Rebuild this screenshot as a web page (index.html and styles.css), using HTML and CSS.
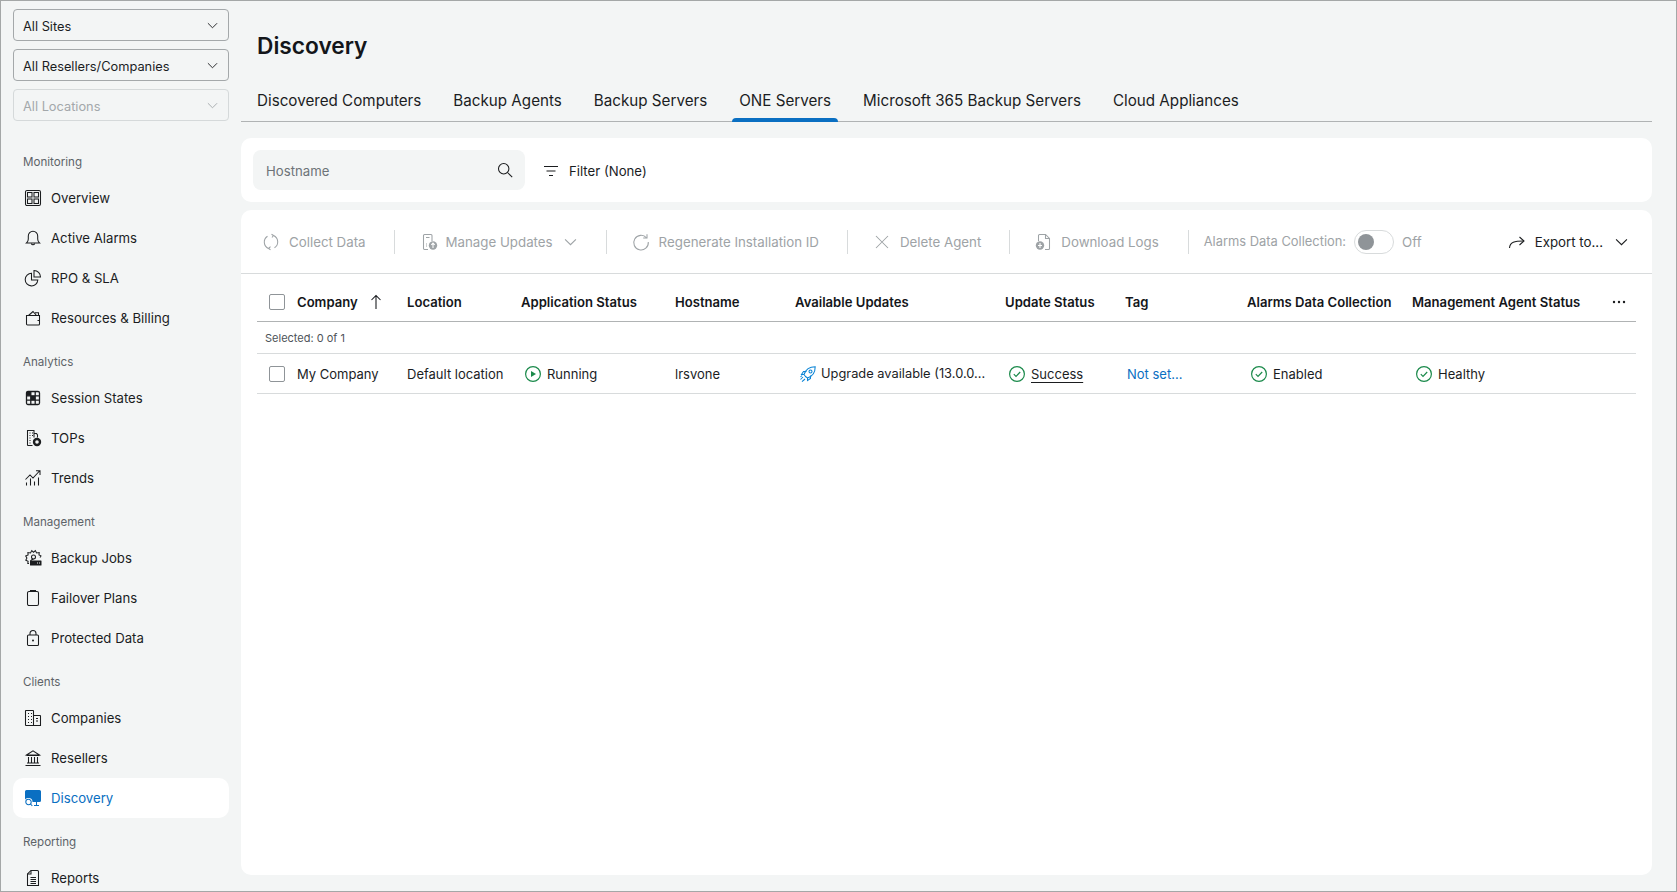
FILE: index.html
```html
<!DOCTYPE html>
<html lang="en">
<head>
<meta charset="utf-8">
<title>Discovery</title>
<link rel="stylesheet" href="styles.css">
</head>
<body>
<div class="app">
  <aside class="sidebar">
    <div class="selects">
      <div class="select"><span>All Sites</span><svg class="chev" viewBox="0 0 12 7"><path d="M1 1l5 5 5-5"/></svg></div>
      <div class="select"><span>All Resellers/Companies</span><svg class="chev" viewBox="0 0 12 7"><path d="M1 1l5 5 5-5"/></svg></div>
      <div class="select disabled"><span>All Locations</span><svg class="chev" viewBox="0 0 12 7"><path d="M1 1l5 5 5-5"/></svg></div>
    </div>
    <nav class="nav">
      <div class="nav-label">Monitoring</div>
      <a class="nav-item"><svg class="ico" viewBox="0 0 16 16"><rect x=".5" y=".5" width="15" height="15" rx="1.5"/><rect x="2.500" y="2.500" width="4.500" height="4.500"/><rect x="9" y="2.500" width="4.500" height="4.500"/><rect x="2.500" y="9" width="4.500" height="4.500"/><rect x="9" y="9" width="4.500" height="4.500"/></svg><span>Overview</span></a>
      <a class="nav-item"><svg class="ico" viewBox="0 0 16 16"><path d="M1.500 13c1.200-1 1.800-2 1.800-4V6a4.700 4.700 0 0 1 9.400 0v3c0 2 .6 3 1.800 4z"/><path d="M6.300 13.500a1.800 1.800 0 0 0 3.400 0"/></svg><span>Active Alarms</span></a>
      <a class="nav-item"><svg class="ico" viewBox="0 0 16 16"><path d="M6.500 3.300a6.300 6.300 0 1 0 6.300 6.700H6.500z"/><path d="M9 .5a6.500 6.500 0 0 1 6.500 6.500H9z"/></svg><span>RPO &amp; SLA</span></a>
      <a class="nav-item"><svg class="ico" viewBox="0 0 16 16"><path d="M1.500 5.500h13v8.500a1 1 0 0 1-1 1h-11a1 1 0 0 1-1-1z"/><path d="M3.500 5.500L8 1.500l3.500 4M10 2.800h3.500v2.700"/><path d="M12.500 10.500h2"/></svg><span>Resources &amp; Billing</span></a>

      <div class="nav-label">Analytics</div>
      <a class="nav-item"><svg class="ico grid" viewBox="0 0 16 16"><rect x="1.500" y="1.500" width="13" height="13" rx="1.500"/><path class="fill" d="M1.500 1.500h4.300v4.300H1.500zM5.800 5.800h4.400v4.400H5.800z"/><path d="M5.800 1.500v13M10.200 1.500v13M1.500 5.800h13M1.500 10.200h13"/></svg><span>Session States</span></a>
      <a class="nav-item"><svg class="ico" viewBox="0 0 16 16"><path d="M2.500 15.500V.5h6.500v7"/><path d="M9 3.500h2.500l1 1.500v2.500"/><path d="M2.500 15.500h5"/><path d="M4.500 3h1M7 3h1M4.500 5.500h1M7 5.500h1M4.500 8h1M4.500 10.500h1M4.500 13h1"/><circle class="fill" cx="12" cy="12" r="4.200"/><circle class="light-fill" cx="12" cy="12" r="1.800"/></svg><span>TOPs</span></a>
      <a class="nav-item"><svg class="ico" viewBox="0 0 16 16"><path d="M.5 9.500L5 5l3 3 6.500-7M11 .8h4V5"/><path d="M1.500 15.500v-3M5.500 15.500V8.500M9.500 15.500v-4M13.500 15.500V7.500"/></svg><span>Trends</span></a>

      <div class="nav-label">Management</div>
      <a class="nav-item"><svg class="ico gear" viewBox="0 0 16 16"><path d="M4 13.500H2.800l.3-2.200-2.300-1.100L1.900 8 .7 5.900l2.400-1L2.900 2.500l2.600.4L6.800.6 8.500 2.300 10.300.6l1.300 2.300 2.600-.4-.2 2.400 2 1-1 1.700"/><circle cx="8.500" cy="7" r="2"/><path d="M5.500 11c.5-1 1.500-1.800 3-1.800"/><rect class="fill" x="5" y="10.500" width="11.500" height="5" rx=".5"/><path class="light" d="M12 13h1M14 13h1"/></svg><span>Backup Jobs</span></a>
      <a class="nav-item"><svg class="ico" viewBox="0 0 16 16"><rect x="2.500" y="1.500" width="11" height="14" rx="1.500"/><path d="M5.500 1.500V.5h5v1"/></svg><span>Failover Plans</span></a>
      <a class="nav-item"><svg class="ico" viewBox="0 0 16 16"><rect x="2.500" y="5" width="11" height="10.500" rx="1"/><path d="M5 5V3.500a3 3 0 0 1 6 0V5"/><circle class="fill" cx="8" cy="10.500" r="1"/></svg><span>Protected Data</span></a>

      <div class="nav-label">Clients</div>
      <a class="nav-item"><svg class="ico" viewBox="0 0 16 16"><path d="M.5 15.500V1a.5.500 0 0 1 .5-.5h7a.5.500 0 0 1 .5.500v14.500"/><path d="M8.500 5.500h6.500a.5.500 0 0 1 .5.500v9.500H.5"/><path d="M3 3.500h1M6 3.500h1M3 6.500h1M6 6.500h1M3 9.500h1M6 9.500h1M3 12.500h1M6 12.500h1M11 8.500h2M11 11h2"/></svg><span>Companies</span></a>
      <a class="nav-item"><svg class="ico" viewBox="0 0 16 16"><path d="M1.500 5L8 .8 14.500 5z"/><path d="M1.500 5.500h13M3.500 7v5.500M6.500 7v5.500M9.500 7v5.500M12.500 7v5.500M2 13h12M.5 15.500h15"/></svg><span>Resellers</span></a>
      <a class="nav-item active"><svg class="ico blue-dark" viewBox="0 0 16 16"><path class="blue-fill" d="M1.500 0h13A1.500 1.500 0 0 1 16 1.500v9a1.500 1.500 0 0 1-1.500 1.500h-13A1.500 1.500 0 0 1 0 10.500v-9A1.500 1.500 0 0 1 1.500 0z"/><circle class="white-fill" cx="3.500" cy="12" r="4"/><circle cx="3.500" cy="12" r="2.700"/><path d="M5.500 14l1.800 1.800M11.500 12v3.500M9 15.500h5"/></svg><span>Discovery</span></a>

      <div class="nav-label">Reporting</div>
      <a class="nav-item"><svg class="ico" viewBox="0 0 16 16"><path d="M2.500 15.500V4l3.500-3.500h6.500a1 1 0 0 1 1 1v14z"/><path d="M6 .5V4H2.500"/><path d="M5.500 7.500h5.500M5.500 9.500h5.500M5.500 11.500h5.500M5.500 13.500h5.500"/></svg><span>Reports</span></a>
    </nav>
  </aside>

  <main class="main">
    <h1 class="title">Discovery</h1>
    <div class="tabs">
      <a class="tab">Discovered Computers</a>
      <a class="tab">Backup Agents</a>
      <a class="tab">Backup Servers</a>
      <a class="tab active">ONE Servers</a>
      <a class="tab">Microsoft 365 Backup Servers</a>
      <a class="tab">Cloud Appliances</a>
    </div>

    <section class="card filter-card">
      <div class="search"><span>Hostname</span><svg class="ico sm" viewBox="0 0 16 16"><circle cx="6.700" cy="6.700" r="5.200"/><path d="M10.500 10.500l4.700 4.700"/></svg></div>
      <button class="filter"><svg class="ico" viewBox="0 0 16 16"><path d="M1 3.500h14M3.500 8h9M6 12.500h4"/></svg><span>Filter (None)</span></button>
    </section>

    <section class="card grid-card">
      <div class="toolbar">
        <span class="tool t1"><svg class="ico" viewBox="0 0 16 16"><path d="M4.500 2.200A7 7 0 0 0 5.500 14.500M11.500 13.800A7 7 0 0 0 10.500 1.500"/><path d="M8.500 .2l2 1.300-1.500 2M7.500 12.700l-2 1.800 2 1.300"/></svg><span>Collect Data</span></span>
        <i class="sep"></i>
        <span class="tool t2"><svg class="ico" viewBox="0 0 16 16"><path d="M6 15.500H2.500a1 1 0 0 1-1-1V1.500a1 1 0 0 1 1-1h6.500a1 1 0 0 1 1 1V7"/><path d="M4 3.500h3.500M4 10h1M4 12h1"/><circle class="grey-fill" cx="11" cy="11.500" r="4.200"/><path class="light" d="M11 14v-5M9.300 10.800L11 9.100l1.700 1.700"/></svg><span>Manage Updates</span><svg class="chev" viewBox="0 0 12 7"><path d="M1 1l5 5 5-5"/></svg></span>
        <i class="sep"></i>
        <span class="tool t3"><svg class="ico" viewBox="0 0 16 16"><path d="M13.500 3.800A7.300 7.300 0 1 0 15.300 8"/><path d="M14 .3v3.700h-3.800"/></svg><span>Regenerate Installation ID</span></span>
        <i class="sep"></i>
        <span class="tool t4"><svg class="ico" viewBox="0 0 16 16"><path d="M2 2l12 12M14 2L2 14"/></svg><span>Delete Agent</span></span>
        <i class="sep"></i>
        <span class="tool t5"><svg class="ico" viewBox="0 0 16 16"><path d="M3.500 7V1.500a1 1 0 0 1 1-1h6l4 4v10a1 1 0 0 1-1 1H10"/><path d="M10.500 .5v4h4"/><circle class="grey-fill" cx="5" cy="11.500" r="4.200"/><path class="light" d="M5 9v5M3 11.500h4"/></svg><span>Download Logs</span></span>
        <i class="sep"></i>
        <span class="tool t6"><span class="alarm">Alarms Data Collection:</span><span class="toggle"><i></i></span><span>Off</span></span>
        <span class="tool export"><svg class="ico" viewBox="0 0 16 16"><path d="M.5 14c.5-6 5-7 14-7"/><path d="M10.500 3l4.500 4-4.500 4"/></svg><span>Export to...</span><svg class="chev" viewBox="0 0 12 7"><path d="M1 1l5 5 5-5"/></svg></span>
      </div>

      <div class="table">
        <div class="row head">
          <div class="cell cb"><i class="check"></i></div>
          <div class="cell">Company<svg class="ico sort" viewBox="0 0 12 16"><path d="M6 15V1.500M1.500 6L6 1.500 10.500 6"/></svg></div>
          <div class="cell">Location</div>
          <div class="cell">Application Status</div>
          <div class="cell">Hostname</div>
          <div class="cell">Available Updates</div>
          <div class="cell">Update Status</div>
          <div class="cell">Tag</div>
          <div class="cell">Alarms Data Collection</div>
          <div class="cell">Management Agent Status</div>
          <div class="cell more"><svg viewBox="0 0 14 4"><circle cx="2" cy="2" r="1.200"/><circle cx="7" cy="2" r="1.200"/><circle cx="12" cy="2" r="1.200"/></svg></div>
        </div>
        <div class="selected">Selected: 0 of 1</div>
        <div class="row data">
          <div class="cell cb"><i class="check"></i></div>
          <div class="cell">My Company</div>
          <div class="cell">Default location</div>
          <div class="cell status"><svg class="ico green" viewBox="0 0 16 16"><circle cx="8" cy="8" r="7.400"/><path class="green-fill" d="M6 5v6l5-3z"/></svg>Running</div>
          <div class="cell">lrsvone</div>
          <div class="cell status upd"><svg class="ico blue" viewBox="0 0 16 16"><path d="M5.500 10.500L4 8.500C5.500 4 9 .8 15.200.8 15.200 7 12 10.500 7.500 12z"/><circle cx="10.500" cy="5.500" r="1.500"/><path d="M4 8.500H1.500L3.500 5.500H6.500M7.500 12v2.500l3-2v-3M3 11l-2.500 2.500M5 13l-3 2.700M2 9.500L.5 11"/></svg><span class="trunc">Upgrade available (13.0.0...</span></div>
          <div class="cell status"><svg class="ico green" viewBox="0 0 16 16"><circle cx="8" cy="8" r="7.400"/><path d="M4.800 8.200l2.200 2.200 4.200-4.400"/></svg><u>Success</u></div>
          <div class="cell link">Not set...</div>
          <div class="cell status"><svg class="ico green" viewBox="0 0 16 16"><circle cx="8" cy="8" r="7.400"/><path d="M4.800 8.200l2.200 2.200 4.200-4.400"/></svg>Enabled</div>
          <div class="cell status"><svg class="ico green" viewBox="0 0 16 16"><circle cx="8" cy="8" r="7.400"/><path d="M4.800 8.200l2.200 2.200 4.200-4.400"/></svg>Healthy</div>
          <div class="cell"></div>
        </div>
      </div>
    </section>
  </main>
</div>
</body>
</html>
```

FILE: styles.css
```css
* { box-sizing: border-box; }
html, body { margin: 0; height: 100%; overflow: hidden; }
body { font-family: Inter, "Liberation Sans", sans-serif; font-size: 13.2px; color: #1b1d1f; background: #f3f5f5; }
.app { display: flex; width: 1677px; height: 892px; border: 1px solid #a4a7a7; overflow: hidden; }

.ico { width: 16px; height: 16px; flex: none; fill: none; stroke: currentColor; stroke-width: 1.05; overflow: visible; }
.ico .fill { fill: currentColor; stroke: none; }
.ico .light { stroke: #f3f5f5; fill: none; }
.ico .light-fill { fill: #f3f5f5; stroke: none; }
.grid { stroke-width: 1.3; }
.chev { width: 13px; height: 8px; flex: none; fill: none; stroke: currentColor; stroke-width: 1; }

.sidebar { width: 240px; flex: none; padding: 8px 12px 0 12px; display: flex; flex-direction: column; }
.selects { display: flex; flex-direction: column; gap: 8px; }
.select { height: 32px; border: 1px solid #a4a8aa; border-radius: 4px; display: flex; align-items: center; justify-content: space-between; padding: 2px 10px 0 9px; color: #1b1d1f; font-size: 12.8px; }
.select .chev { width: 11px; height: 7px; margin-top: -1px; }
.select.disabled { border-color: #d5d9da; color: #a3a8ab; }
.nav { margin-top: 17px; display: flex; flex-direction: column; }
.nav-label { height: 40px; padding: 17px 0 0 10px; font-size: 11.6px; line-height: 14px; color: #5d6368; }
.nav-item { height: 40px; display: flex; align-items: center; gap: 10px; padding-left: 12px; border-radius: 10px; flex: none; }
.nav-item.active { background: #fff; color: #0a6fc2; }
.blue-fill { fill: #0a6fc2; stroke: none; }
.white-fill { fill: #fff; stroke: none; }
.blue-dark { color: #0a6fc2; }

.main { flex: 1; min-width: 0; padding: 0 24px 16px 0; display: flex; flex-direction: column; }
.title { margin: 0; padding: 28px 0 0 16px; height: 85px; font-size: 22.7px; line-height: 34px; font-weight: 600; color: #14161a; }
.tabs { display: flex; height: 36px; padding-left: 9px; gap: 18px; border-bottom: 1px solid #b0b3b4; flex: none; }
.tab { font-size: 15.2px; padding: 0 7px; line-height: 30px; height: 36px; white-space: nowrap; position: relative; }
.tab.active::after { content: ""; position: absolute; left: 0; right: 0; bottom: 0; height: 4px; background: #0a6fc2; border-radius: 4px 4px 0 0; }

.card { background: #fff; border-radius: 10px; }
.filter-card { margin-top: 16px; height: 64px; padding: 12px; display: flex; align-items: center; gap: 18px; flex: none; }
.search { width: 272px; height: 40px; background: #f3f5f5; border-radius: 8px; display: flex; align-items: center; justify-content: space-between; padding: 1px 12px 0 13px; color: #6d7378; }
.search .sm { color: #1b1d1f; margin-top: -1px; }
.filter { display: flex; align-items: center; gap: 10px; background: none; border: 0; padding: 1px 0 0; font: inherit; color: inherit; }

.grid-card { margin-top: 8px; flex: 1; display: flex; flex-direction: column; min-height: 0; }
.toolbar { height: 64px; border-bottom: 1px solid #d8dbdc; display: flex; align-items: center; padding: 0 24px 0 22px; color: #9ea3a6; white-space: nowrap; flex: none; font-size: 13.3px; }
.grey-fill { fill: #9ea3a6; stroke: none; }
.toolbar .light { stroke: #fff; }
.tool { display: flex; align-items: center; gap: 10px; }
.sep { width: 1px; height: 24px; background: #d8dbdc; flex: none; }
.t1 { margin-right: 28px; }
.t2 { margin: 0 29px 0 27px; gap: 8px; }
.t2 .chev { margin-left: 3px; }
.t3 { margin: 0 28px 0 26px; }
.t4 { margin: 0 28px 0 26px; gap: 10px; }
.t5 { margin: 0 29px 0 25px; }
.t6 { margin-left: 15px; gap: 8px; }
.alarm { font-size: 12.9px; }
.toggle { width: 40px; height: 24px; border: 1px solid #d8dbdc; border-radius: 12px; padding: 3px; display: flex; }
.toggle i { width: 16px; height: 16px; border-radius: 50%; background: #8f9498; }
.export { margin-left: auto; color: #1b1d1f; gap: 10px; }
.export .chev { margin-left: 2px; }

.table { margin: 0 16px; font-size: 13px; }
.row { display: grid; grid-template-columns: 40px 110px 114px 154px 120px 210px 120px 122px 165px 200px 24px; align-items: center; }
.head { height: 48px; font-weight: 600; font-size: 13.1px; border-bottom: 1px solid #b0b3b4; color: #14161a; padding-top: 8px; }
.selected { height: 32px; border-bottom: 1px solid #d8dbdc; display: flex; align-items: center; padding-left: 8px; font-size: 11px; color: #4d5358; }
.data { height: 40px; border-bottom: 1px solid #d8dbdc; }
.cell { display: flex; align-items: center; white-space: nowrap; min-width: 0; }
.cb { padding-left: 12px; }
.check { width: 16px; height: 16px; border: 1px solid #8f9498; border-radius: 2px; display: block; }
.sort { width: 12px; height: 16px; margin-left: 12px; }
.more svg { width: 14px; height: 4px; fill: #1b1d1f; }
.status { padding-left: 4px; gap: 6px; }
.upd { padding-left: 5px; gap: 5px; }
.trunc { font-size: 12.85px; }
.green { color: #1b8a4b; stroke-width: 1.2; }
.green-fill { fill: #1b8a4b; stroke: none; }
.blue { color: #0a84d6; }
.link { color: #0a6fc2; padding-left: 2px; }
u { text-underline-offset: 3px; }
```
